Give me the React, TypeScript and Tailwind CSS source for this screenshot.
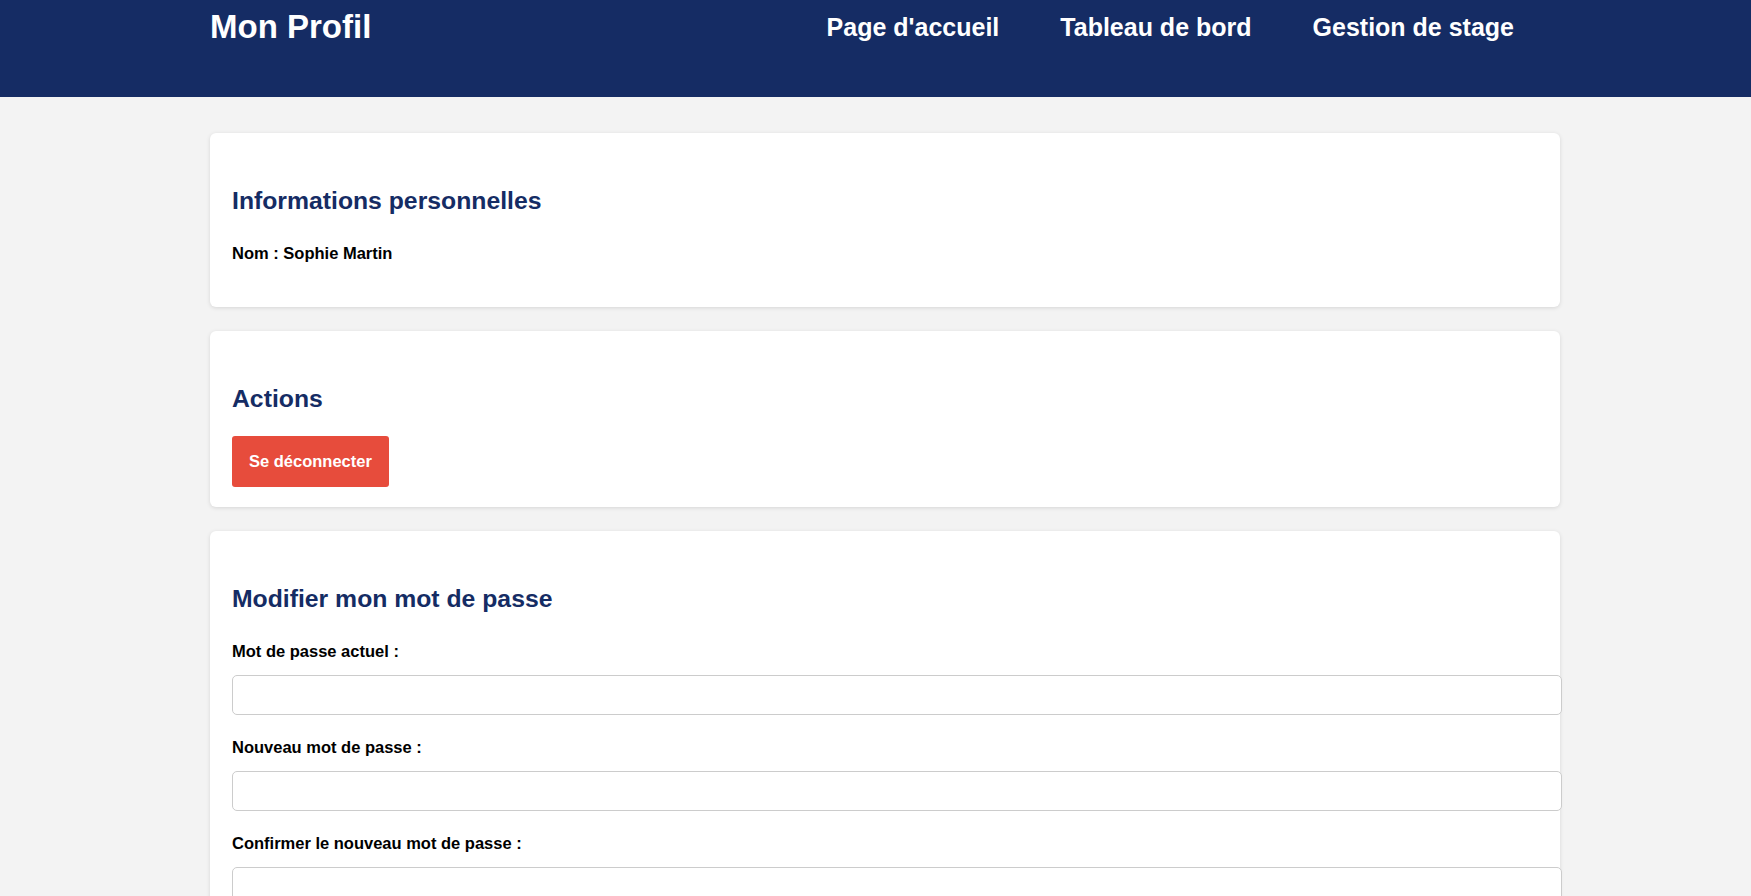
export default function App() {
  return (
    <div className="min-h-screen bg-[#f3f3f3] font-['Liberation_Sans',Arial,sans-serif] text-black">
      {/* En-tête */}
      <header className="h-[97px] bg-[#152c64] text-white">
        <div className="ml-[210px] flex w-[1350px] items-start justify-between">
          <h1 className="mt-[8px] text-[33px] leading-[38px] font-bold">Mon Profil</h1>
          <nav className="mt-[13px] flex gap-[61px] pr-[46px] text-[25px] leading-[28px] font-bold">
            <a href="#">Page d'accueil</a>
            <a href="#">Tableau de bord</a>
            <a href="#">Gestion de stage</a>
          </nav>
        </div>
      </header>

      <main className="ml-[210px] flex w-[1350px] flex-col gap-6 pt-[36px]">
        {/* Infos perso */}
        <section className="rounded-md bg-white px-[22px] pt-[53px] pb-[44px] shadow-[0_1px_4px_rgba(0,0,0,0.12)]">
          <h2 className="text-[24.75px] leading-[29px] font-bold text-[#152c64]">
            Informations personnelles
          </h2>
          <p className="mt-[28px] text-[16.5px] leading-[20px] font-bold">Nom : Sophie Martin</p>
        </section>

        {/* Actions */}
        <section className="rounded-md bg-white px-[22px] pt-[53px] pb-[20px] shadow-[0_1px_4px_rgba(0,0,0,0.12)]">
          <h2 className="text-[24.75px] leading-[29px] font-bold text-[#152c64]">Actions</h2>
          <button className="mt-[23px] h-[51px] rounded-[3px] bg-[#e74c3c] px-[17px] text-[16.5px] font-bold text-white">
            Se déconnecter
          </button>
        </section>

        {/* Mot de passe */}
        <section className="rounded-md bg-white px-[22px] pt-[53px] pb-[40px] shadow-[0_1px_4px_rgba(0,0,0,0.12)]">
          <h2 className="text-[24.75px] leading-[29px] font-bold text-[#152c64]">
            Modifier mon mot de passe
          </h2>
          <div className="mt-[28px] flex flex-col gap-[22px]">
            {["Mot de passe actuel :", "Nouveau mot de passe :", "Confirmer le nouveau mot de passe :"].map(
              (label) => (
                <div key={label} className="flex flex-col gap-[14px]">
                  <label className="text-[16.5px] leading-[20px] font-bold">{label}</label>
                  <input
                    type="password"
                    className="box-content h-[38px] w-full rounded-[5px] border border-[#cccccc] bg-white px-[11px] outline-none"
                  />
                </div>
              )
            )}
          </div>
        </section>
      </main>
    </div>
  );
}
